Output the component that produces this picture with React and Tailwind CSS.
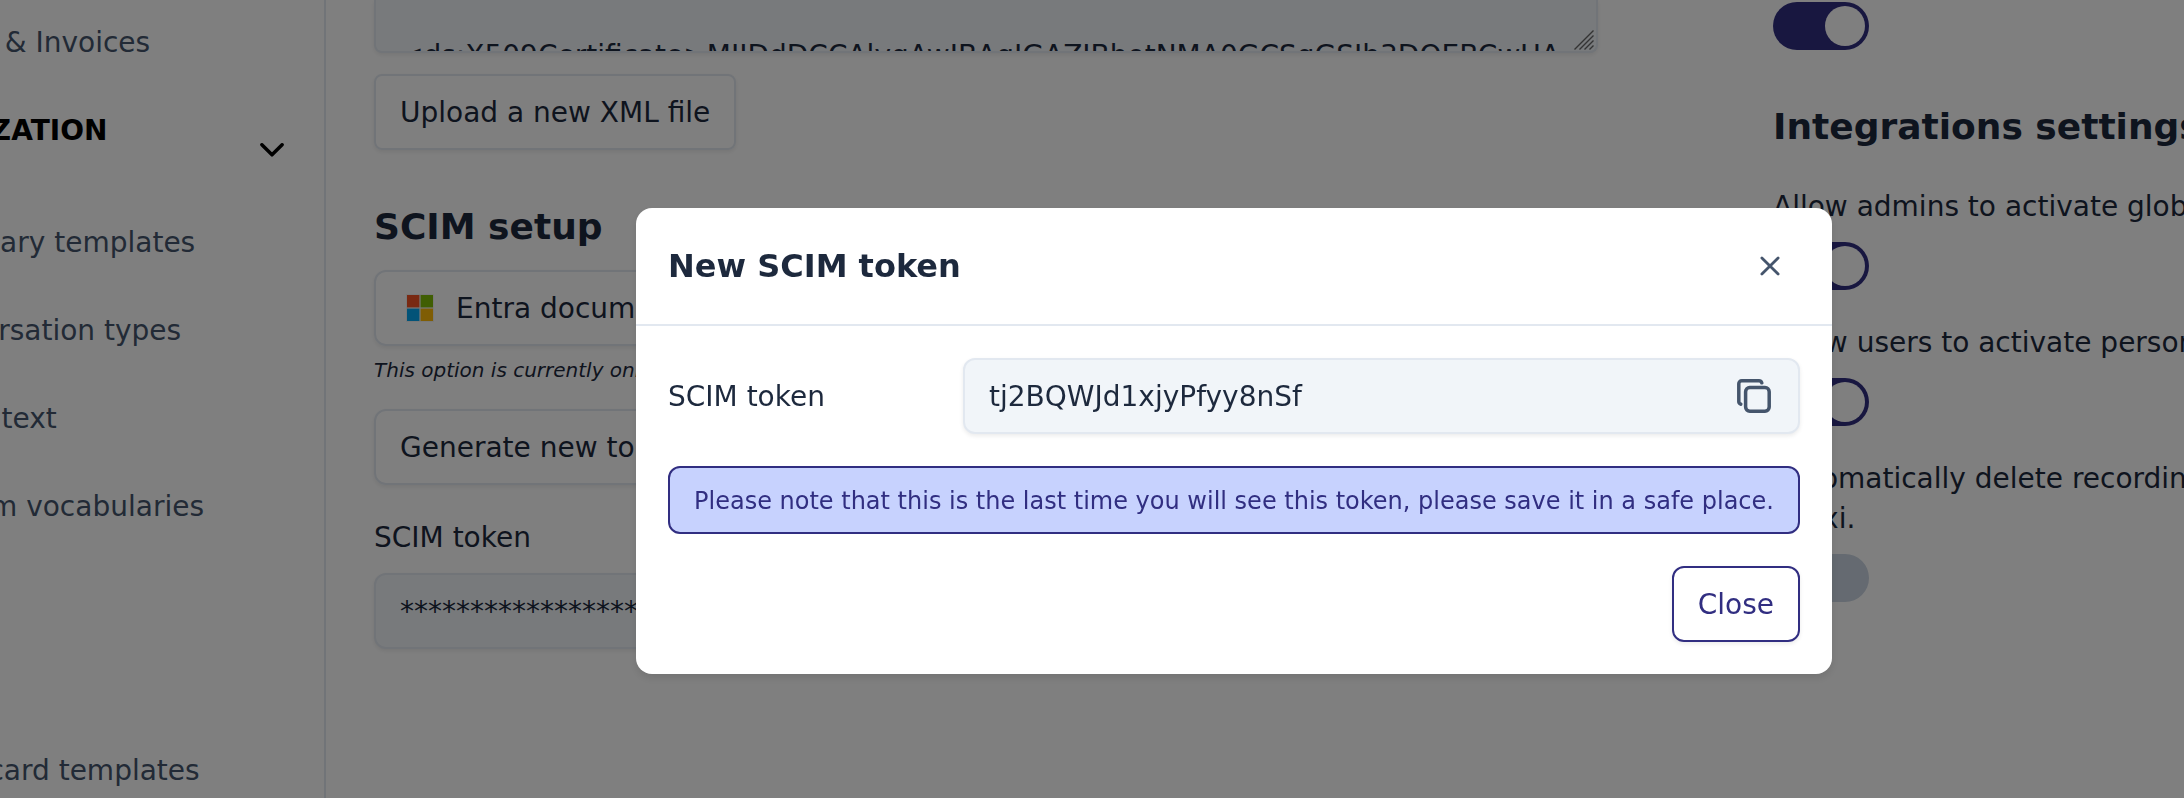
import clsx from 'clsx';

const NAV_ITEMS = [
    { label: 'Summary templates' },
    { label: 'Conversation types' },
    { label: 'Email text', className: 'ml-[5px]' },
    { label: 'Custom vocabularies' },
];

const FIELD = 'border-2 border-slate-200 shadow-[0_2px_4px_rgba(0,0,0,0.08)]';

function Sidebar() {
    return (
        <aside className="w-[326px] h-full shrink-0 overflow-hidden border-r-2 border-slate-200 text-slate-600">
            {/* Scrolled sideways, so the start of every label is cut off */}
            <div className="-ml-[90px] w-[414px] whitespace-nowrap pt-[23px]">
                <div className="h-10">Billing &amp; Invoices</div>
                <div className="mt-12 flex h-[112px] justify-between pr-10 font-bold text-black">
                    <span className="-ml-[43px]">ORGANIZATION</span>
                    <svg width="24" height="14" viewBox="0 0 24 14" fill="none" stroke="currentColor" strokeWidth="3.5" strokeLinecap="round" strokeLinejoin="round" className="mt-8">
                        <polyline points="1.9 1.8 12 11.8 22.1 1.8" />
                    </svg>
                </div>
                {NAV_ITEMS.map((item) => (
                    <div key={item.label} className={clsx('h-[88px]', item.className)}>{item.label}</div>
                ))}
                <div className="mt-[176px] h-10">Scorecard templates</div>
            </div>
        </aside>
    );
}

function MicrosoftLogo() {
    return (
        <svg width="28" height="28" viewBox="0 0 28 28">
            <rect width="28" height="28" fill="#f3f3f3" />
            <rect x="1" y="1" width="12.4" height="12.4" fill="#f35325" />
            <rect x="14.6" y="1" width="12.4" height="12.4" fill="#81bc06" />
            <rect x="1" y="14.6" width="12.4" height="12.4" fill="#05a6f0" />
            <rect x="14.6" y="14.6" width="12.4" height="12.4" fill="#ffba08" />
        </svg>
    );
}

function Toggle({ on }) {
    return (
        <div className={clsx('flex h-12 w-24 items-center rounded-full p-1', on ? 'justify-end bg-[#312e81]' : 'justify-start bg-slate-300')}>
            <div className="size-10 rounded-full bg-white" />
        </div>
    );
}

function SsoSettings() {
    return (
        <section className="w-[1224px] shrink-0">
            {/* Metadata textarea, only its bottom edge is in view */}
            <div className={clsx(FIELD, 'relative h-[53px] overflow-hidden rounded-b-lg border-t-0 bg-slate-100 pl-6')}>
                <p className="mt-9 whitespace-pre leading-10">&lt;ds:X509Certificate&gt;MIIDdDCCAlygAwIBAgIGAZIBhotNMA0GCSqGSIb3DQEBCwUA</p>
                <svg width="20" height="20" viewBox="0 0 20 20" stroke="#666" strokeWidth="1.4" className="absolute right-[2px] bottom-[1px]">
                    <path d="M0.5 19.5L19.5 0.5M5.5 19.5L19.5 5.5M10.5 19.5L19.5 10.5M15.5 19.5L19.5 15.5" />
                </svg>
            </div>
            <button className={clsx(FIELD, 'mt-[21px] block h-[76px] rounded-lg px-6 pt-0.5')}>Upload a new XML file</button>

            <h2 className="mt-[49px] text-[36px] leading-[56px] font-bold">SCIM setup</h2>
            <button className={clsx(FIELD, 'mt-[15px] flex h-[76px] items-center gap-[22px] rounded-xl px-[30px]')}>
                <MicrosoftLogo />
                <span className="pt-0.5">Entra documentation</span>
            </button>
            <p className="mt-[10px] text-[20px] leading-7 italic">This option is currently only available for Entra.</p>
            <button className={clsx(FIELD, 'mt-[25px] block h-[76px] rounded-xl px-6 pt-0.5')}>Generate new token</button>
            <p className="mt-[33px]">SCIM token</p>
            <div className={clsx(FIELD, 'mt-[15px] flex h-[76px] items-center rounded-xl bg-slate-100 px-6 pt-0.5')}>
                ********************************
            </div>
        </section>
    );
}

function IntegrationSettings() {
    return (
        <section className="ml-[175px] w-[520px] shrink-0 whitespace-nowrap pt-[2px]">
            <Toggle on />
            <h2 className="mt-[49px] mb-8 text-[36px] leading-[56px] font-bold">Integrations settings</h2>
            <p className="mb-[15px]">Allow admins to activate global integrations</p>
            <Toggle on />
            <p className="mt-[33px] mb-[15px]">Allow users to activate personal integrations</p>
            <Toggle on />
            <p className="mt-[33px] mb-[15px]">
                Automatically delete recordings from
                <br />
                Leexi.
            </p>
            <Toggle />
        </section>
    );
}

function TokenModal() {
    return (
        <div className="fixed inset-0 z-50 flex items-start justify-center bg-black/50 pt-[208px] pl-[284px]">
            <div className="w-[1196px] rounded-2xl bg-white shadow-[0_4px_8px_rgba(0,0,0,0.1)]">
                <div className="flex h-[118px] items-center justify-between border-b-2 border-slate-200 pr-[52px] pl-8">
                    <h3 className="text-[32px] font-bold">New SCIM token</h3>
                    <button className="text-slate-600">
                        <svg width="20" height="20" viewBox="0 0 20 20" fill="none" stroke="currentColor" strokeWidth="2.8" strokeLinecap="round">
                            <path d="M1.9 1.9l16.2 16.2M18.1 1.9L1.9 18.1" />
                        </svg>
                    </button>
                </div>

                <div className="flex flex-col gap-8 p-8">
                    <div className="flex items-center justify-between">
                        <span className="pt-0.5">SCIM token</span>
                        <div className={clsx(FIELD, 'flex h-[76px] w-[837px] items-center justify-between rounded-xl bg-slate-100 pr-[27px] pl-6')}>
                            <span className="pt-0.5">tj2BQWJd1xjyPfyy8nSf</span>
                            <svg width="34" height="34" viewBox="0 0 34 34" fill="none" stroke="currentColor" strokeWidth="3.5" strokeLinecap="round" strokeLinejoin="round" className="text-slate-600">
                                <rect x="8.6" y="8.6" width="23.6" height="23.6" rx="4.2" />
                                <path d="M3.8 25.2C2.5 24.6 1.8 23.6 1.8 22.4V4.8C1.8 3 3 1.8 4.8 1.8H22C23.4 1.8 24.3 2.5 24.8 3.8" />
                            </svg>
                        </div>
                    </div>
                    <div className="flex h-[68px] items-center justify-center rounded-xl border-2 border-[#312e81] bg-[#c7d2fe] pt-0.5 text-[24px] whitespace-nowrap text-[#312e81]">
                        Please note that this is the last time you will see this token, please save it in a safe place.
                    </div>
                    <button className="h-[76px] self-end rounded-xl border-2 border-[#312e81] px-6 pt-0.5 text-[#312e81] shadow-[0_2px_4px_rgba(0,0,0,0.08)]">
                        Close
                    </button>
                </div>
            </div>
        </div>
    );
}

export default function App() {
    return (
        <div className="flex h-screen w-screen overflow-hidden bg-white font-['DejaVu_Sans',sans-serif] text-[28px] leading-10 text-slate-800">
            <Sidebar />
            <main className="flex min-w-0 flex-1 overflow-hidden pl-12">
                <SsoSettings />
                <IntegrationSettings />
            </main>
            <TokenModal />
        </div>
    );
}
